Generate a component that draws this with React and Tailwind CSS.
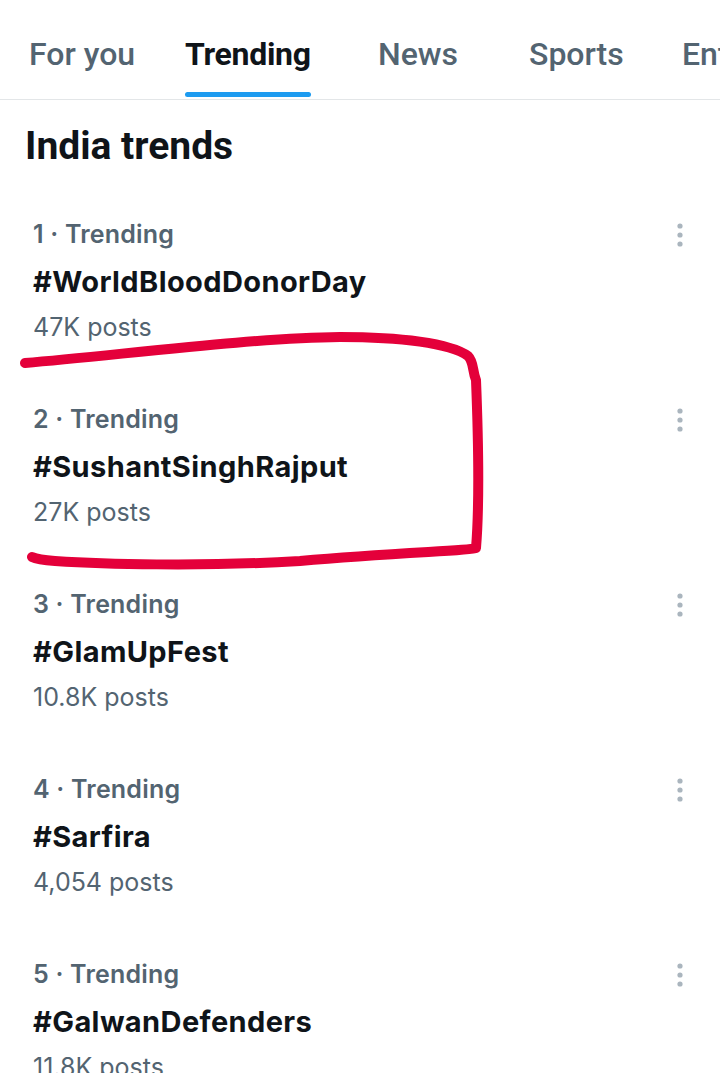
import React from 'react';

const tabs = [
    { label: 'For you', w: 'w-[156px]' },
    { label: 'Trending', w: 'w-[193px]', active: true },
    { label: 'News', w: 'w-[151px]' },
    { label: 'Sports', w: 'w-[153px]' },
    { label: 'Entertainment', w: 'w-[200px]' },
];

const trends = [
    { rank: 1, tag: '#WorldBloodDonorDay', posts: '47K posts' },
    { rank: 2, tag: '#SushantSinghRajput', posts: '27K posts' },
    { rank: 3, tag: '#GlamUpFest', posts: '10.8K posts' },
    { rank: 4, tag: '#Sarfira', posts: '4,054 posts' },
    { rank: 5, tag: '#GalwanDefenders', posts: '11.8K posts' },
];

const Dots = () => (
    <svg width="8" height="26" viewBox="0 0 8 26" className="shrink-0">
        <circle cx="4" cy="4" r="2.6" fill="#aab5be" />
        <circle cx="4" cy="13" r="2.6" fill="#aab5be" />
        <circle cx="4" cy="22" r="2.6" fill="#aab5be" />
    </svg>
);

const TrendItem = ({ rank, tag, posts }) => (
    <div className="h-[185px] pt-[24px] pl-[33px] pr-[36px] font-['Inter',sans-serif]">
        <div className="flex items-center justify-between h-[46px]">
            <span className="text-[25px] font-semibold text-[#536471] tracking-[0.2px]">
                {rank} · Trending
            </span>
            <Dots />
        </div>
        <div className="h-[47px] flex items-center text-[29px] font-bold text-[#0f1419] tracking-[0.4px]">
            {tag}
        </div>
        <div className="h-[46px] flex items-center text-[25px] text-[#536471]">
            {posts}
        </div>
    </div>
);

export default function App() {
    return (
        <div className="relative w-[720px] h-[1073px] overflow-hidden bg-white">
            {/* tab bar */}
            <div className="flex h-[100px] border-b border-[#e3e6e8] pl-[29px] font-['Roboto',sans-serif] whitespace-nowrap">
                {tabs.map((t) => (
                    <div key={t.label} className={`${t.w} shrink-0 flex items-center pt-[8px]`}>
                        <div className="relative h-full flex items-center">
                            <span
                                className={`text-[32px] ${
                                    t.active ? 'font-bold text-[#0f1419] tracking-[-0.3px]' : 'font-medium text-[#536471]'
                                }`}
                            >
                                {t.label}
                            </span>
                            {t.active && (
                                <div className="absolute left-0 right-0 bottom-[2px] h-[5px] rounded-full bg-[#1d9bf0]" />
                            )}
                        </div>
                    </div>
                ))}
            </div>

            {/* heading */}
            <div className="h-[88px] flex items-center px-[25px] pt-[4px]">
                <h1 className="text-[39px] font-bold text-[#0f1419] font-['Roboto',sans-serif]">
                    India trends
                </h1>
            </div>

            {trends.map((t) => (
                <TrendItem key={t.rank} {...t} />
            ))}

            {/* hand-drawn highlight */}
            <svg
                className="absolute inset-0 pointer-events-none"
                width="720"
                height="1073"
                viewBox="0 0 720 1073"
            >
                <path
                    d="M25 363 C120 355 250 338 340 337 C400 337 450 343 468 356 C474 362 472 370 476 380 C478 430 480 500 476 548 C470 551 400 552 300 561 C200 567 100 564 55 561 C40 560 34 558 32 557"
                    fill="none"
                    stroke="#e4003a"
                    strokeWidth="10"
                    strokeLinecap="round"
                    strokeLinejoin="round"
                />
            </svg>
        </div>
    );
}
